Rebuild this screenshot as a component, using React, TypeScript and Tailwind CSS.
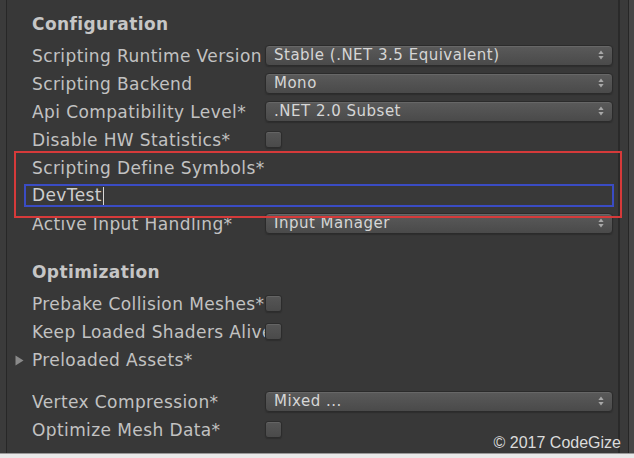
import type { ReactNode } from 'react'

const font = { fontFamily: '"DejaVu Sans", Verdana, sans-serif' }

function Arrows() {
  return (
    <svg width="6" height="10" viewBox="0 0 6 10" className="shrink-0">
      <path d="M3 0.5 L5.6 4 H0.4 Z" fill="#a8a8a8" />
      <path d="M3 9.5 L5.6 6 H0.4 Z" fill="#a8a8a8" />
    </svg>
  )
}

function Dropdown({ value }: { value: string }) {
  return (
    <div className="flex-1 h-[21px] rounded-[4px] border border-[#2b2b2b] bg-gradient-to-b from-[#5a5a5a] to-[#4a4a4a] shadow-[inset_0_1px_0_#676767,0_1px_1px_#2e2e2e] flex items-center pl-[8px] pr-[8px] text-[15px] tracking-[0.5px] text-[#d6d6d6]">
      <span className="flex-1 whitespace-nowrap overflow-hidden pt-[1px]">{value}</span>
      <Arrows />
    </div>
  )
}

function Checkbox() {
  return (
    <div className="w-[17px] h-[17px] rounded-[3px] border border-[#2c2c2c] bg-gradient-to-b from-[#565656] to-[#4a4a4a] shadow-[inset_0_1px_0_#646464,0_1px_1px_#2e2e2e]" />
  )
}

function Row({ label, children }: { label: string; children?: ReactNode }) {
  return (
    <div className="h-[28px] flex items-center">
      <div className="w-[233px] shrink-0 whitespace-nowrap overflow-hidden pt-[3px] text-[17px] tracking-[0.4px] text-[#c2c2c2]">{label}</div>
      {children}
    </div>
  )
}

function Heading({ children }: { children: ReactNode }) {
  return <div className="h-[28px] flex items-center pt-[2px] text-[17px] tracking-[0.4px] font-bold text-[#c6c6c6]">{children}</div>
}

export default function App() {
  return (
    <div className="relative w-[634px] h-[458px] overflow-hidden flex flex-col bg-[#e9e9e9]" style={font}>
      <div className="flex flex-1 min-h-0">
        <div className="w-[6px] bg-[#3b3b3b]" />
        <div className="w-[1px] bg-[#272727]" />
        <div className="flex-1 bg-[#383838] flex flex-col pl-[25px] pr-[5px] pt-[10px]">
          <Heading>Configuration</Heading>
          <div className="mt-[3px]">
            <Row label="Scripting Runtime Version">
              <Dropdown value="Stable (.NET 3.5 Equivalent)" />
            </Row>
            <Row label="Scripting Backend">
              <Dropdown value="Mono" />
            </Row>
            <Row label="Api Compatibility Level*">
              <Dropdown value=".NET 2.0 Subset" />
            </Row>
            <Row label="Disable HW Statistics*">
              <Checkbox />
            </Row>
            <Row label="Scripting Define Symbols*" />
            <div className="h-[28px] flex items-center ml-[-8px] mr-[-1px]">
              <div className="flex-1 h-[23px] border-2 border-[#3a4cc4] bg-[#393939] flex items-center pl-[6px] pt-[1px] text-[17px] tracking-[0.4px] text-[#cecece]">
                DevTest
                <span className="inline-block w-[1px] h-[18px] bg-[#d8d8d8] ml-[1px]" />
              </div>
            </div>
            <Row label="Active Input Handling*">
              <Dropdown value="Input Manager" />
            </Row>
          </div>
          <div className="mt-[21px]">
            <Heading>Optimization</Heading>
          </div>
          <div className="mt-[3px]">
            <Row label="Prebake Collision Meshes*">
              <Checkbox />
            </Row>
            <Row label="Keep Loaded Shaders Alive*">
              <Checkbox />
            </Row>
            <div className="h-[28px] flex items-center ml-[-17px]">
              <svg width="9" height="11" viewBox="0 0 9 11" className="mr-[8px] mt-[2px]">
                <path d="M0.5 0.5 L8.5 5.5 L0.5 10.5 Z" fill="#8a8a8a" />
              </svg>
              <span className="pt-[3px] text-[17px] tracking-[0.4px] text-[#c2c2c2]">Preloaded Assets*</span>
            </div>
          </div>
          <div className="mt-[14px]">
            <Row label="Vertex Compression*">
              <Dropdown value="Mixed ..." />
            </Row>
            <Row label="Optimize Mesh Data*">
              <Checkbox />
            </Row>
          </div>
        </div>
        <div className="w-[2px] bg-[#2a2a2a]" />
        <div className="w-[8px] bg-[#3a3a3a]" />
        <div className="w-[1px] bg-[#262626]" />
        <div className="w-[5px] bg-[#464646]" />
      </div>
      <div className="h-[5px] bg-[#e9e9e9] border-t border-[#9a9a9a]" />

      <div className="absolute left-[14px] top-[151px] w-[608px] h-[67px] border-2 border-[#d63a3a]" />
      <div
        className="absolute right-[13px] bottom-[3px] text-[16px] text-[#dcdcdc]"
        style={{ fontFamily: '"Liberation Sans", Arial, sans-serif' }}
      >
        © 2017 CodeGize
      </div>
    </div>
  )
}
